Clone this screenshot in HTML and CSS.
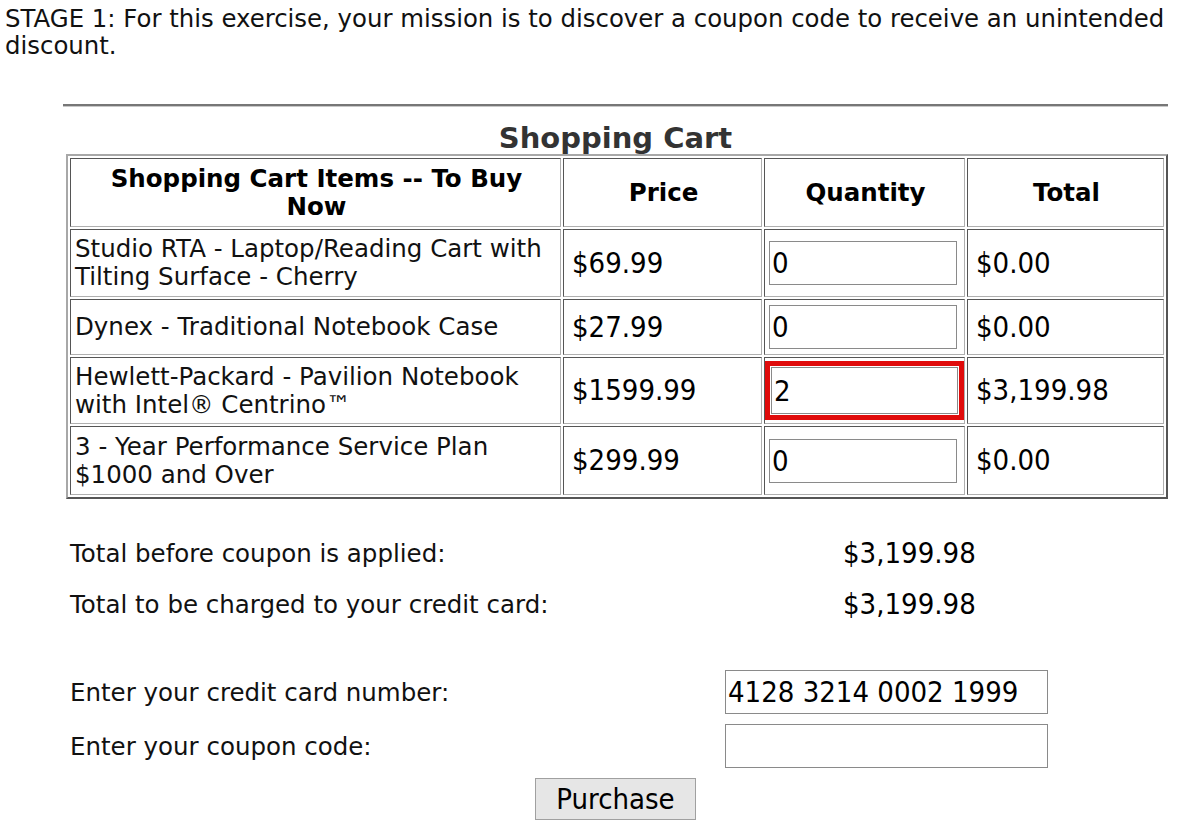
FILE: index.html
```html
<!DOCTYPE html>
<html>
<head>
<meta charset="utf-8">
<link rel="stylesheet" href="styles.css">
</head>
<body>
<p class="intro">STAGE 1: For this exercise, your mission is to discover a coupon code to receive an unintended discount.</p>
<div class="wrap">
  <hr class="rule">
  <h2 class="title">Shopping Cart</h2>
  <table class="cart">
    <tr class="r-head">
      <th class="c-item">Shopping Cart Items -- To Buy<br>Now</th>
      <th class="c-price">Price</th>
      <th class="c-qty">Quantity</th>
      <th class="c-total">Total</th>
    </tr>
    <tr class="r1">
      <td class="desc">Studio RTA - Laptop/Reading Cart with Tilting Surface - Cherry</td>
      <td class="num">$69.99</td>
      <td class="qty"><input class="qinput" type="text" value="0"></td>
      <td class="num">$0.00</td>
    </tr>
    <tr class="r2">
      <td class="desc">Dynex - Traditional Notebook Case</td>
      <td class="num">$27.99</td>
      <td class="qty"><input class="qinput" type="text" value="0"></td>
      <td class="num">$0.00</td>
    </tr>
    <tr class="r3">
      <td class="desc">Hewlett-Packard - Pavilion Notebook with Intel® Centrino™</td>
      <td class="num">$1599.99</td>
      <td class="qty"><div class="hl"><input class="qinput" type="text" value="2"></div></td>
      <td class="num">$3,199.98</td>
    </tr>
    <tr class="r4">
      <td class="desc">3 - Year Performance Service Plan $1000 and Over</td>
      <td class="num">$299.99</td>
      <td class="qty"><input class="qinput" type="text" value="0"></td>
      <td class="num">$0.00</td>
    </tr>
  </table>
  <div class="summary">
    <div class="lbl s1">Total before coupon is applied:</div>
    <div class="val s1">$3,199.98</div>
    <div class="lbl s2">Total to be charged to your credit card:</div>
    <div class="val s2">$3,199.98</div>
    <div class="lbl s3">Enter your credit card number:</div>
    <div class="fld s3"><input class="finput" type="text" value="4128 3214 0002 1999"></div>
    <div class="lbl s4">Enter your coupon code:</div>
    <div class="fld s4"><input class="finput" type="text" value=""></div>
  </div>
  <div class="actions"><button class="buy" type="button">Purchase</button></div>
</div>
</body>
</html>
```
FILE: styles.css
```css
html, body {
  margin: 0;
  padding: 0;
  background: #ffffff;
}
body {
  font-family: "DejaVu Sans", Verdana, sans-serif;
  font-size: 24px;
  line-height: 27px;
  color: #111;
  padding: 5px 0 0 5px;
}
.intro {
  margin: 0;
  width: 1172px;
  font-size: 24.4px;
  line-height: 27px;
}
.wrap {
  margin-left: 58px;
  width: 1105px;
  padding-top: 45px;
}
.rule {
  margin: 0;
  height: 0;
  border: 0;
  border-top: 2px solid #777;
  border-bottom: 1px solid #c8c8c8;
}
.title {
  margin: 16px 0 0;
  text-align: center;
  font-size: 29px;
  line-height: 30px;
  font-weight: bold;
  color: #333;
}
.cart {
  margin: 1px 0 0 3px;
  width: 1102px;
  border-collapse: separate;
  border-spacing: 2px;
  border: 2px solid;
  border-color: #a8a8a8 #555 #555 #a8a8a8;
  table-layout: fixed;
}
.cart th, .cart td {
  border: 1px solid;
  border-color: #555 #b0b0b0 #b0b0b0 #555;
  padding: 0 2px 0 4px;
}
.cart th {
  font-size: 24.5px;
  line-height: 28px;
  font-weight: bold;
  color: #000;
  text-align: center;
}
.c-item { width: 483px; }
.c-price { width: 191px; }
.c-qty { width: 193px; }
.c-total { width: auto; }
.r-head { height: 69px; }
.r1 { height: 68px; }
.r2 { height: 56px; }
.r3 { height: 67px; }
.r4 { height: 69px; }
.desc {
  font-size: 24.5px;
  line-height: 28px;
  color: #111;
}
.cart td.num {
  padding-left: 8px;
  font-family: "DejaVu Sans Condensed", Tahoma, sans-serif;
  font-size: 29px;
  color: #000;
}
.cart td.qty {
  padding: 0 4px;
}
.qinput {
  display: block;
  box-sizing: border-box;
  width: 188px;
  height: 44px;
  border: 1px solid #8a8a8a;
  padding: 0 2px;
  margin: 0;
  font-family: "DejaVu Sans Condensed", Tahoma, sans-serif;
  font-size: 29px;
  color: #000;
  background: #fff;
}
.hl {
  border: 5px solid #e00b0b;
  padding: 1px;
  margin: 0 -4px;
}
.hl .qinput {
  width: 100%;
  height: 47px;
}
.summary {
  display: grid;
  grid-template-columns: 655px 323px;
  margin: 0 0 0 7px;
  padding-top: 29px;
}
.lbl {
  display: flex;
  align-items: center;
  font-size: 24.5px;
  color: #111;
}
.val {
  display: flex;
  align-items: center;
  padding-left: 118px;
  font-family: "DejaVu Sans Condensed", Tahoma, sans-serif;
  font-size: 29px;
  color: #000;
}
.s1 { height: 51px; }
.s2 { height: 51px; }
.s3 { height: 54px; margin-top: 35px; }
.s4 { height: 54px; }
.fld {
  display: flex;
  align-items: center;
}
.finput {
  box-sizing: border-box;
  width: 323px;
  height: 44px;
  border: 1px solid #8a8a8a;
  padding: 0 2px;
  margin: 0;
  font-family: "DejaVu Sans Condensed", Tahoma, sans-serif;
  font-size: 29px;
  color: #000;
  background: #fff;
}
.actions {
  display: flex;
  justify-content: center;
  padding-top: 5px;
}
.buy {
  width: 161px;
  height: 42px;
  background: #e6e6e6;
  border: 1px solid #a0a0a0;
  font-family: "DejaVu Sans Condensed", Tahoma, sans-serif;
  font-size: 29px;
  color: #000;
  padding: 0;
}
```
